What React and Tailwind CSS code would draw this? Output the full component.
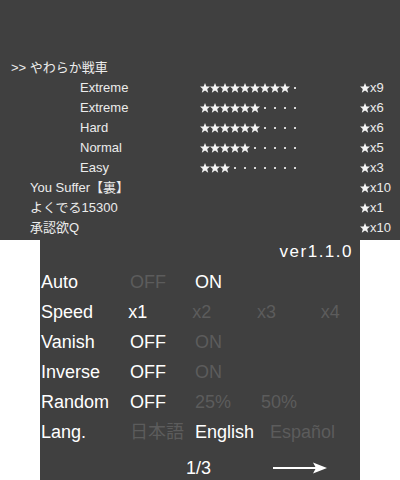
import React from 'react';

const songs = [
    {
        title: 'やわらか戦車',
        selected: true,
        charts: [
            { name: 'Extreme', level: 9, stars: 9 },
            { name: 'Extreme', level: 6, stars: 6 },
            { name: 'Hard', level: 6, stars: 6 },
            { name: 'Normal', level: 5, stars: 5 },
            { name: 'Easy', level: 3, stars: 3 },
        ],
    },
    { title: 'You Suffer【裏】', stars: 10 },
    { title: 'よくでる15300', stars: 1 },
    { title: '承認欲Q', stars: 10 },
];

const options = [
    { label: 'Auto', items: [{ t: 'OFF' }, { t: 'ON', on: true }] },
    { label: 'Speed', items: [{ t: 'x1', on: true }, { t: 'x2' }, { t: 'x3' }, { t: 'x4' }] },
    { label: 'Vanish', items: [{ t: 'OFF', on: true }, { t: 'ON' }] },
    { label: 'Inverse', items: [{ t: 'OFF', on: true }, { t: 'ON' }] },
    { label: 'Random', items: [{ t: 'OFF', on: true }, { t: '25%' }, { t: '50%' }] },
];

const colWidths = ['w-[65px]', 'w-[66px]', 'w-[65px]', 'w-[40px]'];

function Star({ className = '' }) {
    return (
        <svg viewBox="0 0 10 10" className={`w-[10px] h-[10px] ${className}`}>
            <polygon
                points="5,0 6.4,3.5 10,3.6 7.2,5.9 8.2,9.8 5,7.6 1.8,9.8 2.8,5.9 0,3.6 3.6,3.5"
                fill="#f4f4f4"
            />
        </svg>
    );
}

// 10 slots: stars then dots
function StarBar({ count }) {
    return (
        <div className="flex items-center">
            {Array.from({ length: 10 }).map((_, i) => (
                <div key={i} className="w-[10px] h-[20px] flex items-center justify-center">
                    {i < count ? <Star /> : <div className="w-[2px] h-[2px] bg-[#d8d8d8]" />}
                </div>
            ))}
        </div>
    );
}

function Count({ n }) {
    return (
        <div className="flex items-center">
            <Star />
            <span>x{n}</span>
        </div>
    );
}

function SongList() {
    return (
        <div className="h-[240px] bg-[#404040] pt-[58px] text-[13px] leading-[20px] text-[#ececec]">
            {songs.map((song, idx) => (
                <div key={idx}>
                    {song.selected ? (
                        <>
                            <div className="h-[20px] pl-[11px]">&gt;&gt; {song.title}</div>
                            {song.charts.map((c, i) => (
                                <div key={i} className="h-[20px] flex items-center">
                                    <span className="w-[200px] pl-[80px]">{c.name}</span>
                                    <div className="w-[160px]">
                                        <StarBar count={c.stars} />
                                    </div>
                                    <Count n={c.level} />
                                </div>
                            ))}
                        </>
                    ) : (
                        <div className="h-[20px] flex items-center">
                            <span className="w-[360px] pl-[30px]">{song.title}</span>
                            <Count n={song.stars} />
                        </div>
                    )}
                </div>
            ))}
        </div>
    );
}

function Option({ label, items, widths }) {
    return (
        <div className="h-[30px] flex items-center">
            <span className="w-[90px] pl-[1px] text-white">{label}</span>
            {items.map((it, i) => (
                <span key={i} className={`${widths[i]} ${it.on ? 'text-white' : 'text-[#5c5c5c]'}`}>
                    {it.t}
                </span>
            ))}
        </div>
    );
}

function Settings() {
    return (
        <div className="w-[320px] h-[240px] mx-auto bg-[#404040] overflow-hidden text-[18px] leading-[30px]">
            <div className="h-[24px] flex items-center justify-end pr-[7px] text-[17px] tracking-[1.5px] text-white">
                ver1.1.0
            </div>
            <div className="mt-[3px]">
                {options.map((o) => (
                    <Option key={o.label} label={o.label} items={o.items} widths={colWidths} />
                ))}
                <Option
                    label="Lang."
                    items={[{ t: '日本語' }, { t: 'English', on: true }, { t: 'Español' }]}
                    widths={['w-[65px]', 'w-[75px]', 'w-[80px]']}
                />
            </div>
            <div className="mt-[9px] h-[24px] flex items-center text-white">
                <span className="pl-[146px] w-[233px]">1/3</span>
                <svg viewBox="0 0 54 12" className="w-[54px] h-[12px]">
                    <rect x="0" y="5" width="46" height="2" fill="#ffffff" />
                    <polygon points="40,0.5 54,6 40,11.5 43,6" fill="#ffffff" />
                </svg>
            </div>
        </div>
    );
}

export default function App() {
    return (
        <div
            className="w-[400px] h-[480px] bg-white overflow-hidden"
            style={{ fontFamily: '"Liberation Sans", "Noto Sans CJK JP", sans-serif' }}
        >
            <SongList />
            <Settings />
        </div>
    );
}
